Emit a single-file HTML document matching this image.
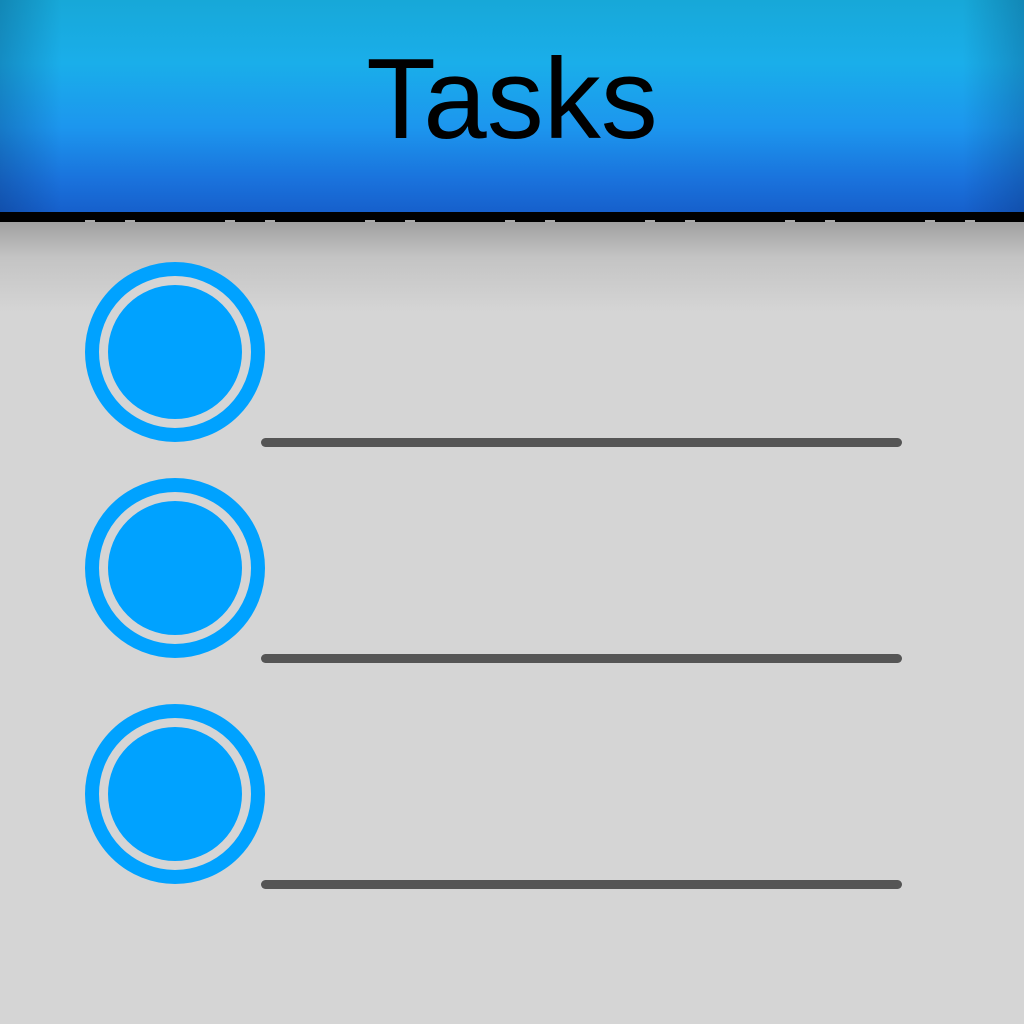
<!DOCTYPE html><html><head><style>
body{margin:0;width:1024px;height:1024px;overflow:hidden;background:#d5d5d5;position:relative;font-family:"Liberation Sans",sans-serif}
#hdr{position:absolute;left:0;top:0;width:1024px;height:212px;background:linear-gradient(#17a8d8 0%,#1aaeea 30%,#1c96ee 60%,#1a72dc 85%,#1660cc 100%)}
#vig{position:absolute;left:0;top:0;width:1024px;height:212px;background:linear-gradient(90deg,rgba(0,20,60,.22),rgba(0,0,0,0) 6%,rgba(0,0,0,0) 94%,rgba(0,20,60,.22))}
#band{position:absolute;left:0;top:212px;width:1024px;height:10px;background:#000}
#sh{position:absolute;left:0;top:222px;width:1024px;height:90px;background:linear-gradient(#a0a0a0,#c4c4c4 40%,#d5d5d5)}
#t{position:absolute;left:0;width:1024px;top:40px;text-align:center;font-size:114px;color:#000;line-height:120px}
.n{position:absolute;top:220px;width:10px;height:2px;background:#aaa}
.c{position:absolute;left:85px;width:152px;height:152px;border-radius:50%;border:14px solid #00a2ff;background:#d5d5d5}
.c::after{content:"";position:absolute;left:9px;top:9px;width:134px;height:134px;border-radius:50%;background:#00a2ff}
.l{position:absolute;left:261px;width:641px;height:9px;border-radius:5px;background:#555}
</style></head><body>
<div id="hdr"></div><div id="vig"></div>
<div id="t">Tasks</div>
<div id="band"></div><div id="sh"></div>
<div class="n" style="left:85px"></div><div class="n" style="left:125px"></div>
<div class="n" style="left:225px"></div><div class="n" style="left:265px"></div>
<div class="n" style="left:365px"></div><div class="n" style="left:405px"></div>
<div class="n" style="left:505px"></div><div class="n" style="left:545px"></div>
<div class="n" style="left:645px"></div><div class="n" style="left:685px"></div>
<div class="n" style="left:785px"></div><div class="n" style="left:825px"></div>
<div class="n" style="left:925px"></div><div class="n" style="left:965px"></div>
<div class="c" style="top:262px"></div><div class="l" style="top:438px"></div>
<div class="c" style="top:478px"></div><div class="l" style="top:654px"></div>
<div class="c" style="top:704px"></div><div class="l" style="top:880px"></div>
</body></html>
